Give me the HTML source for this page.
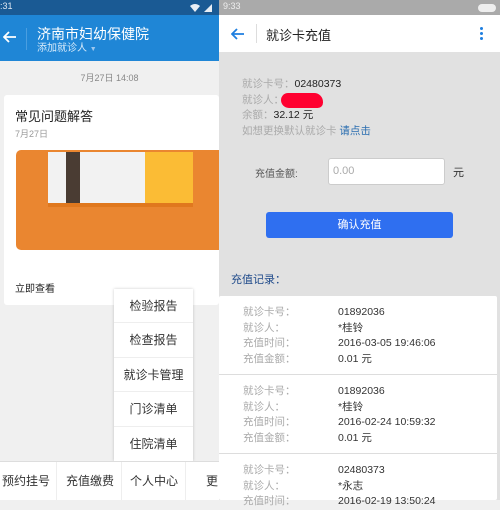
<!DOCTYPE html>
<html><head><meta charset="utf-8"><style>
*{margin:0;padding:0;box-sizing:border-box}
body{width:500px;height:500px;overflow:hidden;position:relative;font-family:"Liberation Sans","Noto Sans CJK SC",sans-serif;background:#f0f0f0}
.a{position:absolute;white-space:nowrap}
.pi{height:34.4px;line-height:34px;border-bottom:1px solid #eee}
</style></head><body>
<!-- LEFT -->
<div class="a" style="left:0;top:0;width:219px;height:500px;background:#f0f0f0"></div>
<div class="a" style="left:0;top:0;width:219px;height:15px;background:#1a5a94"></div>
<div class="a" style="left:0;top:1px;font-size:9px;color:#dfe8f2">:31</div>
<svg class="a" style="left:190px;top:3px" width="28" height="10"><path d="M0 3 Q5 -1 10 3 L5 9Z" fill="#e8eef5"/><path d="M14 9 L22 1 L22 9Z" fill="#e8eef5"/></svg>
<div class="a" style="left:0;top:15px;width:219px;height:46px;background:#1f86d6"></div>
<svg class="a" style="left:3px;top:31px" width="14" height="12"><path d="M1 6 H13 M6 1 L1 6 L6 11" stroke="#fff" stroke-width="1.8" fill="none"/></svg>
<div class="a" style="left:26px;top:28px;width:1px;height:22px;background:#4a9ee0"></div>
<div class="a" style="left:37px;top:24px;font-size:14px;color:#fff">济南市妇幼保健院</div>
<div class="a" style="left:37px;top:39px;font-size:10px;color:#d8ebfa">添加就诊人 <span style="font-size:7px;color:#9cc7ee">▼</span></div>
<div class="a" style="left:0;top:71px;width:219px;text-align:center;font-size:9px;color:#888">7月27日 14:08</div>
<div class="a" style="left:4px;top:95px;width:215px;height:210px;background:#fff;border-radius:3px"></div>
<div class="a" style="left:15px;top:106px;font-size:13px;color:#222">常见问题解答</div>
<div class="a" style="left:15px;top:127px;font-size:9px;color:#999">7月27日</div>
<div class="a" style="left:16px;top:150px;width:203px;height:100px;background:#ea8630;border-radius:5px 0 0 5px"></div>
<div class="a" style="left:48px;top:152px;width:97px;height:51px;background:#f2f2f2"></div>
<div class="a" style="left:66px;top:152px;width:14px;height:51px;background:#4a3c33"></div>
<div class="a" style="left:145px;top:152px;width:48px;height:51px;background:#fbbc35"></div>
<div class="a" style="left:48px;top:203px;width:145px;height:4px;background:#e0781e"></div>
<div class="a" style="left:15px;top:280px;font-size:10px;color:#222">立即查看</div>
<div class="a" style="left:114px;top:289px;width:79px;height:172px;background:#fff;box-shadow:0 0 3px rgba(0,0,0,.2);overflow:hidden"></div>
<div class="a" style="left:114px;top:289px;width:79px;height:172px;overflow:hidden;font-size:12px;color:#333;text-align:center">
<div class="pi">检验报告</div><div class="pi">检查报告</div><div class="pi">就诊卡管理</div><div class="pi">门诊清单</div><div class="pi" style="border:0">住院清单</div></div>
<div class="a" style="left:0;top:461px;width:219px;height:39px;background:#fff;border-top:1px solid #ddd"></div>
<div class="a" style="left:2px;top:472px;font-size:12px;color:#333">预约挂号</div>
<div class="a" style="left:66px;top:472px;font-size:12px;color:#333">充值缴费</div>
<div class="a" style="left:130px;top:472px;font-size:12px;color:#333">个人中心</div>
<div class="a" style="left:206px;top:472px;font-size:12px;color:#333">更</div>
<div class="a" style="left:56px;top:462px;width:1px;height:38px;background:#eee"></div>
<div class="a" style="left:121px;top:462px;width:1px;height:38px;background:#eee"></div>
<div class="a" style="left:185px;top:462px;width:1px;height:38px;background:#eee"></div>
<!-- RIGHT -->
<div class="a" style="left:219px;top:0;width:281px;height:500px;background:#e1e1e1"></div>
<div class="a" style="left:219px;top:0;width:281px;height:15px;background:#aaaaaa"></div>
<div class="a" style="left:223px;top:1px;font-size:9px;color:#eee">9:33</div>
<div class="a" style="left:478px;top:4px;width:18px;height:8px;border-radius:4px;background:#eee"></div>
<div class="a" style="left:219px;top:15px;width:281px;height:37px;background:#fff"></div>
<svg class="a" style="left:231px;top:28px" width="14" height="12"><path d="M1 6 H13 M6 1 L1 6 L6 11" stroke="#1e7fe0" stroke-width="1.8" fill="none"/></svg>
<div class="a" style="left:256px;top:24px;width:1px;height:19px;background:#ddd"></div>
<div class="a" style="left:266px;top:25px;font-size:13px;color:#222">就诊卡充值</div>
<div class="a" style="left:480px;top:27px;width:3px;height:3px;border-radius:50%;background:#1e7fe0;box-shadow:0 5px 0 #1e7fe0,0 10px 0 #1e7fe0"></div>
<div class="a" style="left:242px;top:77px;font-size:10.5px;line-height:15.5px;color:#aaa">就诊卡号：<span style="color:#222">02480373</span><br>就诊人：<br>余额：<span style="color:#222">32.12 元</span><br>如想更换默认就诊卡 <span style="color:#2a6db0">请点击</span></div>
<div class="a" style="left:281px;top:93px;width:42px;height:15px;background:#ff0030;border-radius:8px 10px 6px 9px"></div>
<div class="a" style="left:255px;top:165px;font-size:10px;color:#555">充值金额:</div>
<div class="a" style="left:328px;top:158px;width:117px;height:27px;background:#fff;border:1px solid #ccc;border-radius:3px;font-size:11px;color:#aaa;padding:6px 0 0 4px">0.00</div>
<div class="a" style="left:453px;top:164px;font-size:11px;color:#333">元</div>
<div class="a" style="left:266px;top:212px;width:187px;height:26px;background:#2f6ff0;border-radius:3px;color:#fff;font-size:11px;text-align:center;line-height:26px">确认充值</div>
<div class="a" style="left:231px;top:271px;font-size:11px;color:#1f4a8a">充值记录：</div>
<div class="a" style="left:219px;top:296px;width:278px;height:204px;background:#fff;border-radius:2px"></div>
<div class="a" style="left:219px;top:374px;width:278px;height:1px;background:#ddd"></div>
<div class="a" style="left:219px;top:453px;width:278px;height:1px;background:#ddd"></div>
<div class="a" style="left:243px;top:305px;font-size:10.5px;line-height:15.5px;color:#aaa">就诊卡号：<br>就诊人：<br>充值时间：<br>充值金额：</div>
<div class="a" style="left:338px;top:305px;font-size:10.5px;line-height:15.5px;color:#333">01892036<br>*桂铃<br>2016-03-05 19:46:06<br>0.01 元</div>
<div class="a" style="left:243px;top:384px;font-size:10.5px;line-height:15.5px;color:#aaa">就诊卡号：<br>就诊人：<br>充值时间：<br>充值金额：</div>
<div class="a" style="left:338px;top:384px;font-size:10.5px;line-height:15.5px;color:#333">01892036<br>*桂铃<br>2016-02-24 10:59:32<br>0.01 元</div>
<div class="a" style="left:243px;top:463px;font-size:10.5px;line-height:15.5px;color:#aaa">就诊卡号：<br>就诊人：<br>充值时间：</div>
<div class="a" style="left:338px;top:463px;font-size:10.5px;line-height:15.5px;color:#333">02480373<br>*永志<br>2016-02-19 13:50:24</div>
</body></html>
